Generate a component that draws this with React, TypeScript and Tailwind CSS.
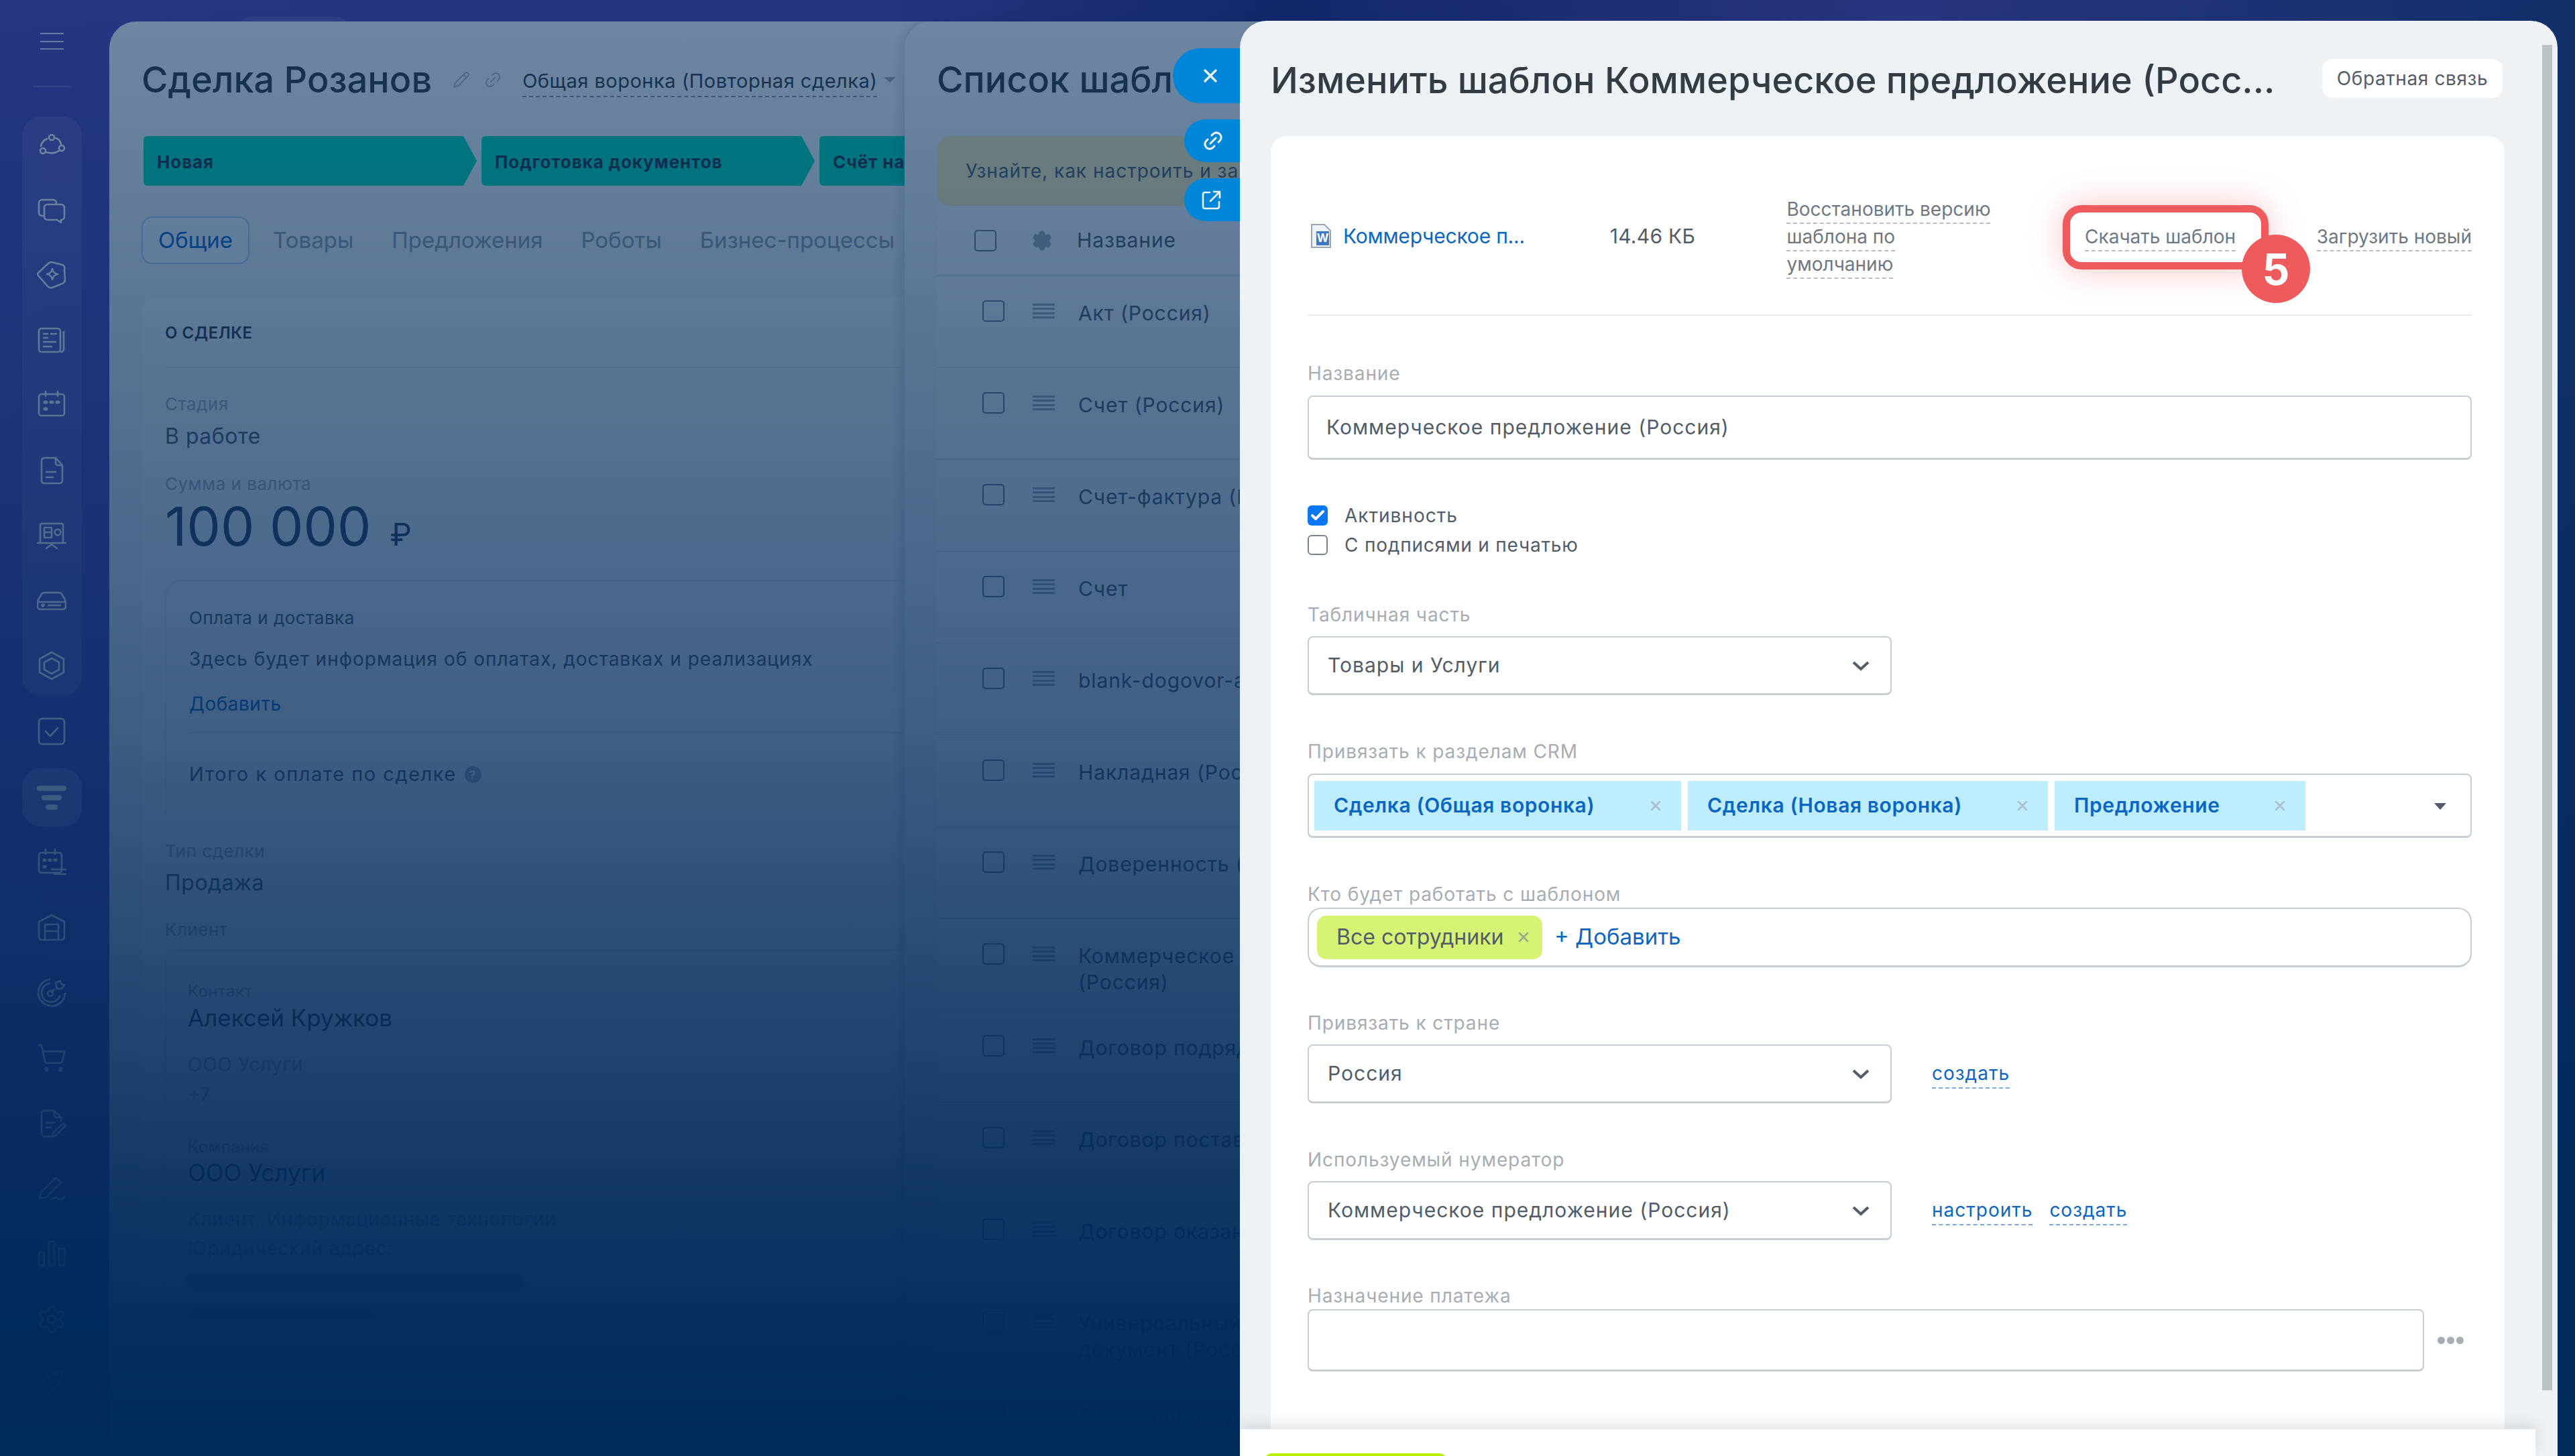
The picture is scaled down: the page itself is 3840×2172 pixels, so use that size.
import { ReactNode } from 'react';
import { Check, Link2, Pencil, Settings, ShoppingCart, X } from 'lucide-react';

const ic = 'w-[44px] h-[44px] fill-none stroke-white stroke-[2.6]';

// left menu, same order as the picture
const menuIcons: { y: string; node: ReactNode }[] = [
  { y: 'mt-0', node: (
    <svg viewBox="0 0 44 44" className={ic} strokeLinecap="round"><circle cx="22" cy="10" r="4" /><circle cx="9" cy="30" r="4" /><circle cx="37" cy="26" r="4" /><path d="M15 12c-5 2-8 6-9 11M28 11c4 1 7 4 8 9M14 32c6 2 13 2 19-2" /></svg>
  ) },
  { y: 'mt-[53px]', node: (
    <svg viewBox="0 0 44 44" className={ic} strokeLinejoin="round"><path d="M12 30H8c-3 0-5-2-5-5V11c0-3 2-5 5-5h16c3 0 5 2 5 5v2" /><path d="M16 13h20c3 0 5 2 5 5v13c0 3-2 5-5 5v4l-6-4H16c-3 0-5-2-5-5V18c0-3 2-5 5-5z" /></svg>
  ) },
  { y: 'mt-[52px]', node: (
    <svg viewBox="0 0 44 44" className={ic} strokeLinejoin="round"><path d="M22 3l16 4c3 1 4 4 3 7l1 15c0 3-2 5-4 6l-15 6c-3 1-5 0-7-2L2 23c-1-1-1-3 0-4L17 5c1-1 3-2 5-2z" /><path d="M23 13c1 5 3 7 8 8-5 1-7 3-8 8-1-5-3-7-8-8 5-1 7-3 8-8z" /></svg>
  ) },
  { y: 'mt-[53px]', node: (
    <svg viewBox="0 0 44 44" className={ic} strokeLinecap="round"><rect x="3" y="5" width="32" height="35" rx="4" /><path d="M40 10v26c0 2-2 4-4 4" /><path d="M10 19h6M10 13h6M21 13h8M10 25h18M10 32h12" /></svg>
  ) },
  { y: 'mt-[52px]', node: (
    <svg viewBox="0 0 44 44" className={ic} strokeLinecap="round"><rect x="3" y="7" width="38" height="32" rx="4" /><path d="M13 3v7M31 3v7" /><path d="M12 19h2M21 19h2M30 19h2M12 29h2" strokeWidth="5" /></svg>
  ) },
  { y: 'mt-[55px]', node: (
    <svg viewBox="0 0 44 44" className={ic} strokeLinecap="round" strokeLinejoin="round"><path d="M11 3h17l10 11v23c0 2-2 4-4 4H11c-2 0-4-2-4-4V7c0-2 2-4 4-4z" /><path d="M28 3v7c0 3 2 4 4 4h6M14 24h14M14 32h10" /></svg>
  ) },
  { y: 'mt-[53px]', node: (
    <svg viewBox="0 0 44 44" className={ic} strokeLinecap="round" strokeLinejoin="round"><path d="M1 33h42M5 33V6c0-1 1-2 2-2h30c1 0 2 1 2 2v27" /><rect x="11" y="10" width="11" height="15" /><path d="M11 17h11" /><circle cx="31" cy="17" r="4.5" /><path d="M14 41l8-6 8 6" /></svg>
  ) },
  { y: 'mt-[53px]', node: (
    <svg viewBox="0 0 44 44" className={ic} strokeLinecap="round" strokeLinejoin="round"><path d="M1 25c0-2 1-4 2-6l4-7c1-1 2-2 4-2h22c2 0 3 1 4 2l4 7c1 2 2 4 2 6v6c0 2-2 4-4 4H5c-2 0-4-2-4-4z" /><path d="M1 24h42M17 29h18" /><circle cx="9" cy="29" r="1.5" /></svg>
  ) },
  { y: 'mt-[53px]', node: (
    <svg viewBox="0 0 44 44" className={ic} strokeLinejoin="round"><path d="M22 2l18 10v20L22 42 4 32V12z" /><path d="M22 11l11 6v11l-11 6-11-6V17z" /></svg>
  ) },
  { y: 'mt-[52px]', node: (
    <svg viewBox="0 0 44 44" className={ic} strokeLinecap="round" strokeLinejoin="round"><rect x="3" y="3" width="38" height="38" rx="5" /><path d="M13 22l7 7 11-12" /></svg>
  ) },
];

const lowerIcons: ReactNode[] = [
  <svg viewBox="0 0 44 44" className={ic} strokeLinecap="round"><rect x="3" y="8" width="34" height="30" rx="4" /><path d="M13 3v7M27 3v7" /><path d="M11 19h1M19 19h1M27 19h1M11 29h1" strokeWidth="5" /><path d="M22 33h21M26 40h17" /></svg>,
  <svg viewBox="0 0 44 44" className={ic} strokeLinejoin="round"><path d="M3 14L22 4l19 10v23c0 2-2 4-4 4H7c-2 0-4-2-4-4z" /><path d="M12 41V18h20v23M12 28h20" /></svg>,
  <svg viewBox="0 0 44 44" className={ic} strokeLinecap="round"><path d="M34 28a14 14 0 1 1-15-19" /><path d="M42 24A20 20 0 1 1 19 3" /><path d="M26 18l-4 4" /><path d="M28 8l7-3 1 5 5 1-4 6h-7z" /><circle cx="20" cy="24" r="4" /></svg>,
  <ShoppingCart className="w-[46px] h-[46px] text-white" strokeWidth={1.3} />,
  <svg viewBox="0 0 44 44" className={ic} strokeLinecap="round" strokeLinejoin="round"><path d="M22 41H11c-2 0-4-2-4-4V7c0-2 2-4 4-4h15l10 10v5" /><path d="M26 3v7c0 2 2 3 4 3h6M14 21h12M14 28h7" /><path d="M24 36l15-14 4 3-15 15-5 1z" /></svg>,
  <svg viewBox="0 0 44 44" className={ic} strokeLinecap="round" strokeLinejoin="round"><path d="M6 28L28 6l8 7-22 22-10 2z" /><path d="M22 38c4-3 8-3 10-1s6 1 9-2" /></svg>,
  <svg viewBox="0 0 44 44" className={ic} strokeLinejoin="round"><rect x="3" y="20" width="8" height="20" rx="2" /><rect x="18" y="4" width="8" height="36" rx="2" /><rect x="33" y="14" width="8" height="26" rx="2" /></svg>,
  <Settings className="w-[46px] h-[46px] text-white" strokeWidth={1.4} />,
];

function Dashed({ children, blue }: { children: ReactNode; blue?: boolean }) {
  return (
    <span className={`block w-fit border-b-2 border-dashed ${blue ? 'border-[#7ea9df] text-[#0b66c3]' : 'border-[#b9bec4] text-[#6f7882]'}`}>
      {children}
    </span>
  );
}

function Label({ children, mt }: { children: ReactNode; mt: string }) {
  return <div className={`${mt} text-[28px] leading-[32px] tracking-[0.9px] text-[#a8adb4]`}>{children}</div>;
}

function Select({ value, side }: { value: string; side?: ReactNode }) {
  return (
    <div className="flex items-center">
      <div className="w-[871px] h-[88px] flex items-center justify-between pl-[28px] pr-[30px] bg-white rounded-[8px] border-2 border-b-[3px] border-[#c6cdd3] text-[30px] tracking-[1px] text-[#535c69]">
        {value}
        <svg viewBox="0 0 28 16" className="w-[28px] h-[16px] fill-none stroke-[#535c69] stroke-[4]"><path d="M3 3l11 10L25 3" /></svg>
      </div>
      {side}
    </div>
  );
}

function Chip({ w, text }: { w: string; text: string }) {
  return (
    <div className={`${w} h-[74px] pl-[29px] pr-[26px] flex items-center justify-between bg-[#bdedff] text-[30px] font-semibold tracking-[0.6px] text-[#0b66c3]`}>
      {text}
      <X className="w-[24px] h-[24px] text-[#a9bfc9]" strokeWidth={2.5} />
    </div>
  );
}

function Row({ name }: { name: ReactNode }) {
  return (
    <div className="h-[137px] w-[900px] shrink-0 flex items-start pt-[36px] border-b-2 border-[#dfe3e6]">
      <span className="shrink-0 ml-[68px] w-[33px] h-[32px] rounded-[5px] border-2 border-[#6b7a8c]" />
      <div className="shrink-0 ml-[42px] w-[33px] h-[22px] mt-[5px] flex flex-col justify-between">
        <span className="h-[3px] bg-[#a0a8b3]" /><span className="h-[3px] bg-[#a0a8b3]" /><span className="h-[3px] bg-[#a0a8b3]" /><span className="h-[3px] bg-[#a0a8b3]" />
      </div>
      <div className="shrink-0 ml-[35px] text-[30px] leading-[39px] text-[#535c69] whitespace-nowrap tracking-[0.9px]">{name}</div>
    </div>
  );
}

function Stage({ text, w }: { text: string; w: string }) {
  return (
    <div className={`${w} h-[74px] shrink-0 pl-[20px] pt-[2px] flex items-center bg-[#00d7b2] rounded-l-[6px] [clip-path:polygon(0_0,96%_0,100%_50%,96%_100%,0_100%)] text-[26px] font-bold tracking-[0.9px] text-[#28323c]`}>
      {text}
    </div>
  );
}

export default function App() {
  return (
    <div className="relative w-[3840px] h-[2172px] overflow-hidden font-['Inter','Noto_Sans',sans-serif] bg-[linear-gradient(90deg,#4f44b2_0%,#5040ae_34%,#26267b_50%,#5540aa_74%,#26367b_100%)]">
      {/* left menu */}
      <aside className="absolute left-0 top-0 bottom-0 w-[154px] flex flex-col items-center">
        <div className="mt-[49px] w-[35px] h-[25px] flex flex-col justify-between">
          <span className="h-[2px] bg-white/80" /><span className="h-[2px] bg-white/80" /><span className="h-[2px] bg-white/80" />
        </div>
        <div className="mt-[54px] w-[56px] h-[2px] bg-white/20" />
        <div className="mt-[44px] w-[89px] h-[864px] rounded-[28px] bg-white/10 flex flex-col items-center pt-[21px]">
          {menuIcons.slice(0, 9).map((m, i) => (
            <div key={i} className={m.y}>{m.node}</div>
          ))}
        </div>
        <div className="mt-[31px]">{menuIcons[9].node}</div>
        <div className="mt-[33px] w-[89px] h-[87px] rounded-[28px] bg-white/20 flex flex-col items-center justify-center gap-[6px]">
          <span className="w-[44px] h-[8px] rounded-full bg-white" />
          <span className="w-[30px] h-[8px] rounded-full bg-white" />
          <span className="w-[18px] h-[8px] rounded-full bg-white" />
        </div>
        <div className="mt-[31px] flex flex-col items-center gap-[53px]">
          {lowerIcons.map((node, i) => <div key={i}>{node}</div>)}
        </div>
        <div className="mt-[41px] w-[80px] h-[60px] rounded-[18px] bg-white/20 flex items-center justify-center">
          <svg viewBox="0 0 44 44" className="w-[38px] h-[38px] fill-none stroke-white stroke-[3]"><path d="M4 28c6-14 18-22 36-24-2 18-10 30-24 36l-6-6z" /></svg>
        </div>
      </aside>

      <div className="absolute left-[354px] top-[25px] w-[166px] h-[20px] rounded-t-[20px] bg-white/10" />

      {/* deal slider */}
      <section className="absolute left-[163px] top-[32px] bottom-0 w-[1400px] rounded-tl-[40px] bg-[#eef2f4] pl-[48px] pt-[57px] overflow-hidden">
        <div className="h-[60px] flex items-center whitespace-nowrap">
          <h1 className="text-[54px] leading-[60px] font-medium text-[#333c45]">Сделка Розанов</h1>
          <Pencil className="ml-[31px] w-[26px] h-[26px] text-[#a3acb5]" strokeWidth={1.5} />
          <Link2 className="ml-[20px] w-[28px] h-[28px] text-[#a3acb5] -rotate-45" strokeWidth={1.5} />
          <span className="ml-[30px] mt-[6px] border-b-2 border-dashed border-[#8a94a0] text-[29px] tracking-[0.5px] text-[#333c45]">Общая воронка (Повторная сделка)</span>
          <span className="ml-[10px] w-0 h-0 border-x-[9px] border-x-transparent border-t-[8px] border-t-[#9aa4ae]" />
        </div>
        <div className="mt-[54px] ml-[3px] flex gap-[7px]">
          <Stage text="Новая" w="w-[497px]" />
          <Stage text="Подготовка документов" w="w-[497px]" />
          <Stage text="Счёт на предоплату" w="w-[497px]" />
        </div>
        <div className="mt-[46px] h-[71px] flex items-center text-[33px] text-[#8f9aa7] whitespace-nowrap">
          <span className="w-[161px] h-[71px] flex items-center justify-center rounded-[16px] border-2 border-[#a6cdf5] bg-[#f3f8fd] text-[#0b66c3]">Общие</span>
          <span className="ml-[35px]">Товары</span>
          <span className="ml-[57px]">Предложения</span>
          <span className="ml-[57px]">Роботы</span>
          <span className="ml-[57px]">Бизнес-процессы</span>
        </div>
        <div className="mt-[49px] rounded-t-[24px] bg-[#f4f7f8] pl-[35px] pt-[37px] text-[#535c69]">
          <div className="pb-[33px] border-b-2 border-[#e8ebed] text-[24px] leading-[34px] font-semibold text-[#333c45] uppercase tracking-[0.5px]">О сделке</div>
          <div className="mt-[38px] text-[26px] leading-[32px] text-[#a8adb4] tracking-[0.5px]">Стадия</div>
          <div className="mt-[12px] text-[32px] leading-[40px] tracking-[0.5px]">В работе</div>
          <div className="mt-[35px] text-[26px] leading-[32px] text-[#a8adb4] tracking-[0.5px]">Сумма и валюта</div>
          <div className="mt-[7px] h-[80px] flex items-baseline text-[#2f4560] whitespace-nowrap">
            <span className="text-[80px] leading-[80px]">100 000</span>
            <span className="ml-[28px] text-[46px] leading-[80px]">₽</span>
          </div>
          <div className="mt-[40px] rounded-tl-[24px] border-l-2 border-t-2 border-[#e8ebed] pl-[34px] pt-[39px]">
            <div className="text-[26px] leading-[32px] tracking-[0.5px]">Оплата и доставка</div>
            <div className="mt-[27px] text-[28px] leading-[36px] tracking-[1px] whitespace-nowrap">Здесь будет информация об оплатах, доставках и реализациях</div>
            <div className="mt-[31px] text-[28px] leading-[36px] tracking-[0.5px] text-[#0b66c3] pb-[24px] border-b-2 border-[#e8ebed]">Добавить</div>
            <div className="mt-[43px] h-[36px] flex items-center text-[29px] tracking-[1.5px]">
              Итого к оплате по сделке
              <span className="ml-[12px] w-[25px] h-[25px] rounded-full bg-[#a8b3c0] text-white text-[18px] font-bold flex items-center justify-center">?</span>
            </div>
            <div className="h-[43px]" />
          </div>
          <div className="mt-[38px] text-[26px] leading-[32px] text-[#a8adb4] tracking-[0.5px]">Тип сделки</div>
          <div className="mt-[11px] text-[32px] leading-[40px] tracking-[0.5px]">Продажа</div>
          <div className="mt-[34px] text-[26px] leading-[32px] text-[#a8adb4] tracking-[0.5px]">Клиент</div>
          <div className="mt-[13px] rounded-tl-[24px] border-l-2 border-t-2 border-[#e8ebed] pl-[32px] pt-[46px]">
            <div className="text-[24px] leading-[30px] text-[#a8adb4] tracking-[0.5px]">Контакт</div>
            <div className="mt-[4px] text-[35px] leading-[40px] text-[#333c45]">Алексей Кружков</div>
            <div className="mt-[32px] text-[28px] leading-[36px] text-[#a8adb4] tracking-[0.8px]">ООО Услуги</div>
            <div className="mt-[9px] text-[28px] leading-[36px] text-[#a8adb4]">+7</div>
            <div className="mt-[45px] text-[24px] leading-[30px] text-[#a8adb4] tracking-[0.5px]">Компания</div>
            <div className="mt-[3px] text-[35px] leading-[40px] text-[#333c45]">ООО Услуги</div>
            <div className="mt-[32px] text-[28px] leading-[36px] text-[#a8adb4] tracking-[0.8px] whitespace-nowrap">Клиент, Информационные технологии</div>
            <div className="mt-[7px] text-[28px] leading-[36px] text-[#a8adb4] tracking-[0.8px]">Юридический адрес:</div>
            <div className="mt-[20px] h-[22px] w-[500px] rounded bg-[#a8adb4] blur-[5px]" />
            <div className="mt-[30px] h-[20px] w-[280px] rounded bg-[#a8adb4] blur-[5px]" />
          </div>
        </div>
      </section>

      {/* templates list slider */}
      <section className="absolute left-[1349px] top-[32px] bottom-0 w-[560px] rounded-tl-[40px] bg-[#eef2f4] pl-[48px] pt-[57px] overflow-hidden shadow-[-6px_0_16px_rgba(0,40,90,0.15)]">
        <h2 className="h-[60px] text-[54px] leading-[60px] font-medium text-[#333c45] whitespace-nowrap">Список шаблонов</h2>
        <div className="mt-[54px] h-[104px] pl-[43px] flex items-center rounded-tl-[20px] rounded-bl-[20px] bg-[#faebaf] text-[28px] tracking-[1px] text-[#535c69] whitespace-nowrap">
          Узнайте, как настроить и загрузить шаблон
        </div>
        <div className="h-[105px] flex items-center border-b-2 border-[#dfe3e6] bg-[#f4f7f8]">
          <span className="shrink-0 ml-[56px] w-[33px] h-[32px] rounded-[5px] border-2 border-[#6b7a8c]" />
          <Settings className="shrink-0 ml-[52px] w-[32px] h-[32px] text-[#a0a8b3] fill-[#a0a8b3]" />
          <span className="ml-[36px] text-[30px] tracking-[0.9px] text-[#535c69]">Название</span>
        </div>
        <div className="flex flex-col bg-[#f4f7f8]">
          <Row name="Акт (Россия)" />
          <Row name="Счет (Россия)" />
          <Row name="Счет-фактура (Россия)" />
          <Row name="Счет" />
          <Row name="blank-dogovor-arendy" />
          <Row name="Накладная (Россия)" />
          <Row name="Доверенность (Россия)" />
          <Row name={<>Коммерческое предложение<br />(Россия)</>} />
          <Row name="Договор подряда" />
          <Row name="Договор поставки" />
          <Row name="Договор оказания услуг" />
          <Row name={<>Универсальный передаточный<br />документ (Россия)</>} />
          <Row name={<>Акт об оприходовании<br />(Россия)</>} />
        </div>
      </section>

      <div className="absolute inset-0 bg-[linear-gradient(180deg,rgba(0,42,90,0.53)_0%,rgba(0,42,90,0.74)_50%,rgba(0,42,90,0.92)_80%,rgba(0,42,90,0.97)_90%,rgba(0,42,90,1)_100%)]" />

      {/* slider side buttons */}
      <div className="absolute left-[1749px] top-[72px] w-[130px] h-[82px] rounded-l-[41px] bg-[#0086d8] pl-[40px] flex items-center">
        <X className="w-[32px] h-[32px] text-[#eef2f4]" strokeWidth={2.5} />
      </div>
      <div className="absolute left-[1766px] top-[178px] w-[110px] h-[64px] rounded-l-[32px] bg-[#0086d8] pl-[26px] flex items-center">
        <Link2 className="w-[34px] h-[34px] text-[#eef2f4] -rotate-45" strokeWidth={2.2} />
      </div>
      <div className="absolute left-[1766px] top-[266px] w-[110px] h-[64px] rounded-l-[32px] bg-[#0086d8] pl-[26px] flex items-center">
        <svg viewBox="0 0 30 30" className="w-[30px] h-[30px] fill-none stroke-[#eef2f4] stroke-[2.6]" strokeLinecap="round" strokeLinejoin="round"><path d="M12 4H5C3 4 2 5 2 7v18c0 2 1 3 3 3h18c2 0 3-1 3-3v-7" /><path d="M13 17L27 3M18 3h9v9" /></svg>
      </div>

      {/* edit template slider */}
      <section className="absolute left-[1849px] top-[31px] right-[26px] bottom-0 rounded-t-[40px] bg-[#eef2f4] overflow-hidden">
        <header className="h-[115px] pt-[57px] pl-[46px] flex items-start justify-between pr-[82px]">
          <h1 className="text-[54px] leading-[64px] font-medium text-[#333c45] whitespace-nowrap">Изменить шаблон Коммерческое предложение (Росс...</h1>
          <button className="w-[269px] h-[58px] rounded-[16px] bg-white text-[28px] tracking-[0.6px] text-[#535c69]">Обратная связь</button>
        </header>
        <div className="mt-[57px] ml-[46px] w-[1840px] h-[2000px] rounded-t-[24px] bg-white pl-[55px] pr-[49px] pt-[92px] text-[#535c69]">
          <div className="relative h-[118px] flex items-center border-0 text-[28px] leading-[39px] whitespace-nowrap">
            <svg viewBox="0 0 37 36" className="w-[37px] h-[36px] shrink-0 mb-[4px]"><path d="M6 1h19l9 9v25H6z" fill="#eef3f8" stroke="#9aa6b2" strokeWidth="2" /><rect x="13" y="11" width="19" height="21" fill="#3f78c9" /><text x="22.5" y="27" textAnchor="middle" fontSize="17" fontWeight="700" fill="#fff">W</text></svg>
            <span className="ml-[16px] w-[398px] mb-[4px] text-[30px] tracking-[-0.2px] text-[#0b66c3]">Коммерческое п...</span>
            <span className="w-[264px] mb-[4px] text-[30px] tracking-[0.3px]">14.46 КБ</span>
            <div className="w-[445px]">
              <Dashed>Восстановить версию</Dashed>
              <Dashed>шаблона по</Dashed>
              <Dashed>умолчанию</Dashed>
            </div>
            <div className="w-[346px]"><Dashed>Скачать шаблон</Dashed></div>
            <Dashed>Загрузить новый</Dashed>
            <div className="absolute left-[1126px] top-[11px] w-[307px] h-[96px] rounded-[28px] border-[11px] border-[#ef5a5d] shadow-[0_0_50px_rgba(239,90,93,0.35)]" />
            <div className="absolute left-[1393px] top-[55px] w-[102px] h-[102px] rounded-full bg-[#ef5a5d] flex items-center justify-center text-[64px] font-bold text-white">5</div>
          </div>
          <div className="mt-[56px] h-[2px] bg-[#e8ebed]" />

          <Label mt="mt-[70px]">Название</Label>
          <div className="mt-[17px] h-[96px] pl-[26px] flex items-center rounded-[8px] border-2 border-b-[3px] border-[#c6cdd3] text-[30px] tracking-[1px]">Коммерческое предложение (Россия)</div>

          <div className="mt-[68px] h-[30px] flex items-center gap-[25px] text-[28px] tracking-[1px]">
            <span className="w-[30px] h-[30px] rounded-[6px] bg-[#0a78f5] flex items-center justify-center"><Check className="w-[24px] h-[24px] text-white" strokeWidth={4} /></span>
            Активность
          </div>
          <div className="mt-[14px] h-[30px] flex items-center gap-[25px] text-[28px] tracking-[0.8px]">
            <span className="w-[30px] h-[30px] rounded-[6px] border-2 border-[#7a838d]" />
            С подписями и печатью
          </div>

          <Label mt="mt-[73px]">Табличная часть</Label>
          <div className="mt-[16px]"><Select value="Товары и Услуги" /></div>

          <Label mt="mt-[68px]">Привязать к разделам CRM</Label>
          <div className="relative mt-[17px] h-[96px] pl-[8px] flex items-center gap-[10px] rounded-[8px] border-2 border-b-[3px] border-[#c6cdd3]">
            <Chip w="w-[547px]" text="Сделка (Общая воронка)" />
            <Chip w="w-[537px]" text="Сделка (Новая воронка)" />
            <Chip w="w-[374px]" text="Предложение" />
            <span className="absolute right-[36px] top-[42px] w-0 h-0 border-x-[9px] border-x-transparent border-t-[10px] border-t-[#535c69]" />
          </div>

          <Label mt="mt-[68px]">Кто будет работать с шаблоном</Label>
          <div className="mt-[4px] h-[89px] pl-[12px] flex items-center rounded-[20px] border-2 border-b-[3px] border-[#c6cdd3] text-[32px]">
            <span className="w-[336px] h-[65px] pl-[29px] pr-[16px] flex items-center justify-between rounded-[14px] bg-[#d7f374] whitespace-nowrap">
              Все сотрудники
              <X className="w-[24px] h-[24px] text-[#98a88a]" strokeWidth={2.5} />
            </span>
            <span className="ml-[18px] text-[#0b66c3] text-[33px]">+ Добавить</span>
          </div>

          <Label mt="mt-[67px]">Привязать к стране</Label>
          <div className="mt-[16px]">
            <Select value="Россия" side={<div className="ml-[60px] text-[28px] tracking-[1px]"><Dashed blue>создать</Dashed></div>} />
          </div>

          <Label mt="mt-[68px]">Используемый нумератор</Label>
          <div className="mt-[16px]">
            <Select value="Коммерческое предложение (Россия)" side={
              <div className="ml-[60px] flex gap-[25px] text-[28px] tracking-[1px]"><Dashed blue>настроить</Dashed><Dashed blue>создать</Dashed></div>
            } />
          </div>

          <Label mt="mt-[67px]">Назначение платежа</Label>
          <div className="mt-[4px] flex items-center">
            <div className="w-[1665px] h-[93px] rounded-[8px] border-2 border-b-[3px] border-[#c6cdd3]" />
            <div className="ml-[20px] flex gap-[3px]">
              <span className="w-[11px] h-[11px] rounded-full bg-[#a8adb4]" /><span className="w-[11px] h-[11px] rounded-full bg-[#a8adb4]" /><span className="w-[11px] h-[11px] rounded-full bg-[#a8adb4]" />
            </div>
          </div>
        </div>

        <div className="absolute right-[8px] top-[36px] bottom-[98px] w-[15px] bg-[#bcc3c4]" />
        <div className="absolute left-0 bottom-0 w-[1932px] h-[40px] bg-white shadow-[0_-8px_20px_rgba(0,0,0,0.10)]">
          <div className="absolute left-[36px] top-[36px] w-[273px] h-[20px] rounded-t-[12px] bg-[#b9f000]" />
        </div>
      </section>
    </div>
  );
}
